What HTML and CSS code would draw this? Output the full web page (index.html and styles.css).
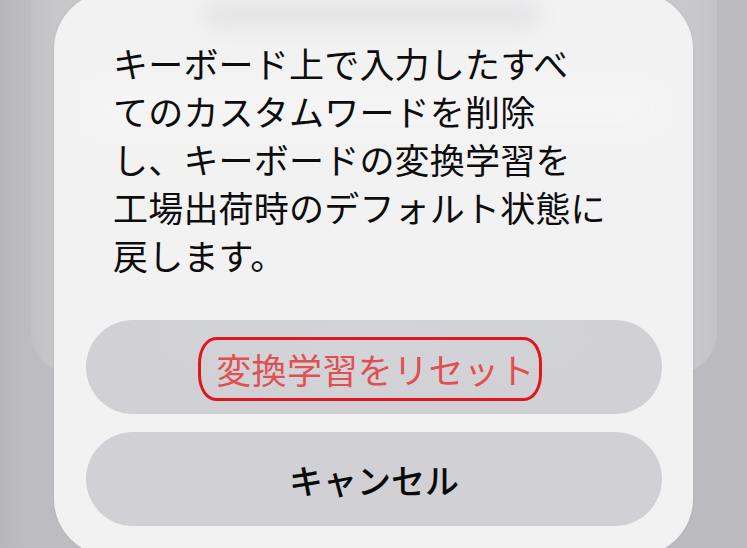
FILE: index.html
```html
<!DOCTYPE html>
<html lang="ja">
<head>
<meta charset="utf-8">
<link rel="stylesheet" href="styles.css">
</head>
<body>
<div class="stage">
  <div class="backpanel"></div>
  <div class="sheet">
    <div class="ghost"></div>
    <div class="ghost2"></div>
    <p class="message">キーボード上で入力したすべ<br>てのカスタムワードを削除<br>し、キーボードの変換学習を<br>工場出荷時のデフォルト状態に<br>戻します。</p>
    <div class="actions">
      <button class="btn btn-danger"><span class="mark">変換学習をリセット</span></button>
      <button class="btn btn-cancel">キャンセル</button>
    </div>
  </div>
</div>
</body>
</html>
```
FILE: styles.css
```css
html, body {
  margin: 0;
  padding: 0;
  width: 747px;
  height: 548px;
  overflow: hidden;
}
body {
  background: linear-gradient(90deg, #b8b8bc 0%, #bdbdc1 4%, #bcbcc0 100%);
  font-family: "Noto Sans CJK JP", "Noto Sans", sans-serif;
}
.stage {
  position: relative;
  width: 747px;
  height: 548px;
}
.backpanel {
  position: absolute;
  left: 31px;
  top: -60px;
  width: 686px;
  height: 434px;
  border-radius: 0 0 42px 42px;
  background: linear-gradient(90deg, #c2c2c4 0%, #c8c8ca 4%, #c9c9cb 96%, #c4c4c6 100%);
}
.sheet {
  position: absolute;
  left: 54px;
  top: -8px;
  width: 639px;
  height: 564px;
  border-radius: 57px;
  background: #f2f2f3;
  box-shadow: 0 0 3px rgba(0,0,0,0.08);
  box-sizing: border-box;
  padding: 47px 31px 0 32px;
  overflow: hidden;
}
.ghost {
  position: absolute;
  left: 150px;
  top: 12px;
  width: 335px;
  height: 22px;
  border-radius: 11px;
  background: #e2e2e4;
  filter: blur(10px);
}
.ghost2 {
  position: absolute;
  left: 40px;
  top: 100px;
  width: 560px;
  height: 30px;
  background: #f8f8f8;
  filter: blur(14px);
  opacity: 0.7;
}
.message {
  position: relative;
  margin: 0 0 41px 27px;
  font-size: 35px;
  line-height: 48px;
  color: #0d0d0d;
  letter-spacing: 0.2px;
}
.actions {
  display: flex;
  flex-direction: column;
  gap: 18px;
}
.btn {
  height: 94px;
  border: none;
  border-radius: 47px;
  background: #d1d1d5;
  font-family: "Noto Sans CJK JP", "Noto Sans", sans-serif;
  font-size: 34px;
  display: flex;
  align-items: center;
  justify-content: center;
  padding: 0;
}
.btn-danger {
  color: #e24f52;
  background: radial-gradient(ellipse at 50% 20%, #d3d5da 0%, #d1d1d5 60%);
}
.btn-cancel {
  color: #0a0a0a;
  font-weight: 500;
}
.mark {
  display: inline-block;
  border: 3px solid #e2141d;
  border-radius: 18px / 26px;
  padding: 3px 4px 3px 15px;
  font-size: 35px;
  letter-spacing: 0.4px;
  line-height: 52px;
  margin-top: 4px;
  margin-left: -8px;
}
```
